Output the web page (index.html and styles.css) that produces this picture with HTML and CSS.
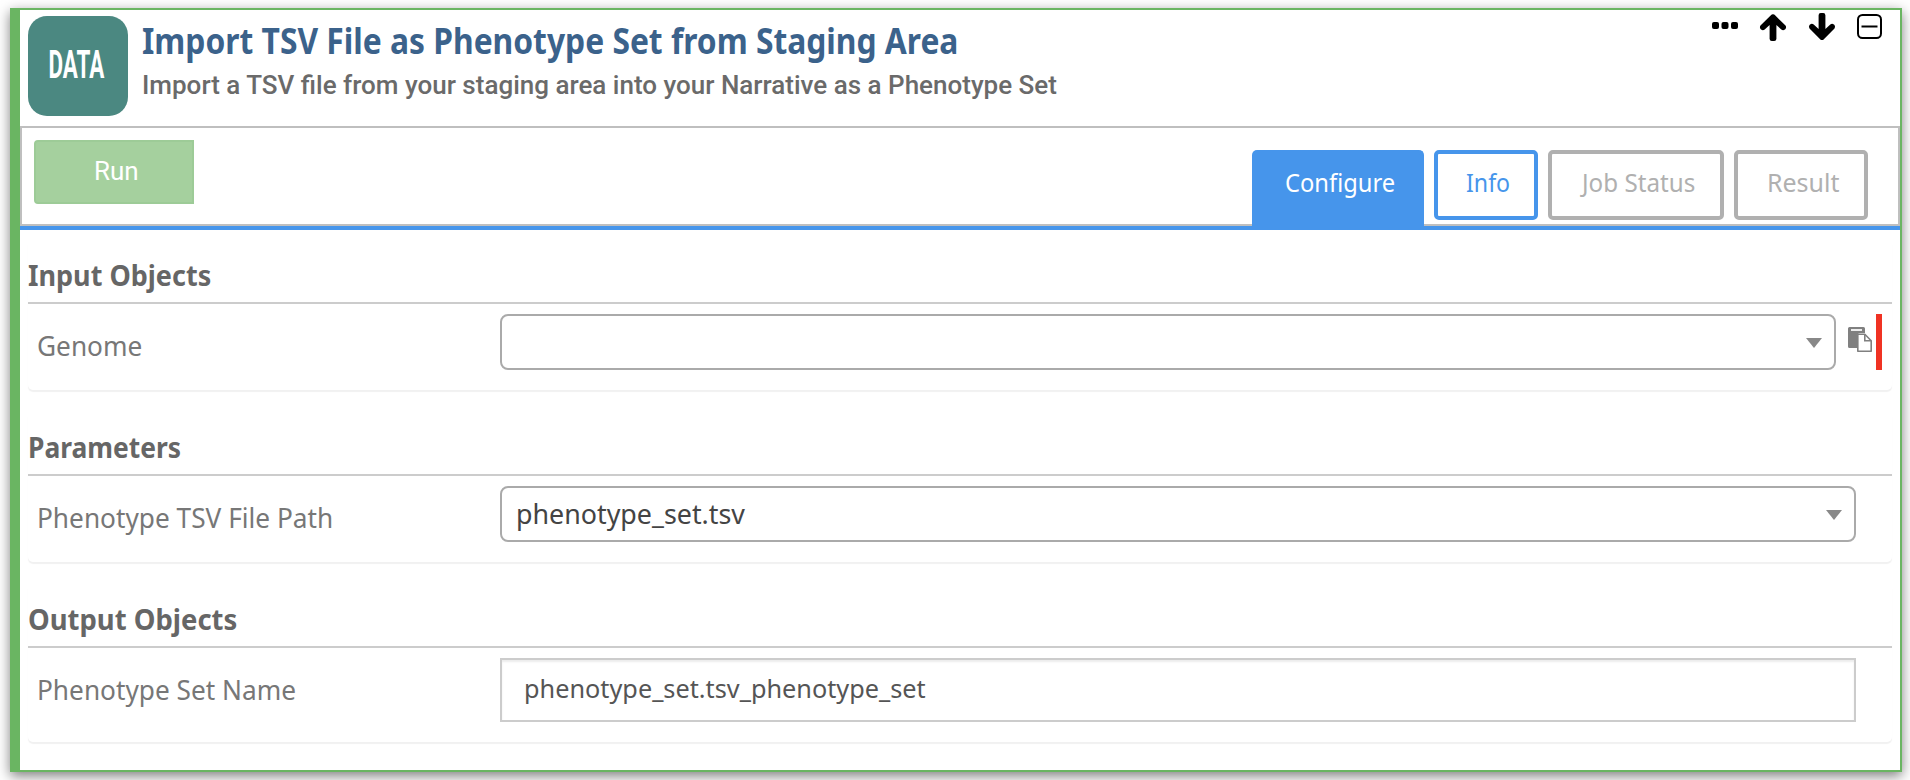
FILE: index.html
```html
<!DOCTYPE html>
<html lang="en">
<head>
<meta charset="utf-8">
<title>Import TSV File as Phenotype Set from Staging Area</title>
<link rel="stylesheet" href="styles.css">
</head>
<body>
<article class="cell">
  <header class="header">
    <div class="app-icon"><span>DATA</span></div>
    <div class="heading">
      <h1 class="title">Import TSV File as Phenotype Set from Staging Area</h1>
      <p class="subtitle">Import a TSV file from your staging area into your Narrative as a Phenotype Set</p>
    </div>
    <div class="actions">
      <svg width="26" height="30" viewBox="0 0 26 30"><rect y="11" width="7" height="7" rx="2"/><rect x="9.5" y="11" width="7" height="7" rx="2"/><rect x="19" y="11" width="7" height="7" rx="2"/></svg>
      <svg width="28" height="30" viewBox="0 0 28 30"><path d="M14 3.2a1.8 1.8 0 0 1 1.600.6L26.500 14.600a2.900 2.900 0 0 1 0 3.300l-.6.6a2.900 2.900 0 0 1-3.600 0L17.400 14v14a2.200 2.200 0 0 1-2.200 2h-2.400a2.200 2.200 0 0 1-2.200-2V14l-4.900 4.500a2.900 2.900 0 0 1-3.600 0l-.6-.6a2.900 2.900 0 0 1 0-3.300L12.400 3.800a1.800 1.800 0 0 1 1.600-.6z"/></svg>
      <svg width="28" height="30" viewBox="0 0 28 30"><path d="M14 29a1.8 1.8 0 0 1-1.600-.6L1.500 17.400a2.900 2.900 0 0 1 0-3.300l.6-.6a2.900 2.900 0 0 1 3.600 0l4.900 4.500V4.200A2.200 2.200 0 0 1 12.800 2h2.400a2.200 2.200 0 0 1 2.200 2.200V18l4.900-4.500a2.900 2.900 0 0 1 3.600 0l.6.6a2.900 2.900 0 0 1 0 3.300l-10.900 11a1.800 1.800 0 0 1-1.600.6z"/></svg>
      <svg width="25" height="30" viewBox="0 0 25 30"><rect x="1" y="4" width="23" height="23" rx="4.500" fill="none" stroke="#000" stroke-width="2"/><path d="M4.500 14.500h16v2h-16z"/></svg>
    </div>
  </header>
  <div class="toolbar-wrap">
    <div class="toolbar">
      <button class="run">Run</button>
      <nav class="tabs">
        <button class="tab active"><span class="t-configure">Configure</span></button>
        <button class="tab info"><span class="t-info">Info</span></button>
        <button class="tab job"><span class="t-job">Job Status</span></button>
        <button class="tab result"><span class="t-result">Result</span></button>
      </nav>
    </div>
  </div>
  <main class="body">
    <section class="group">
      <h2><span class="h-input">Input Objects</span></h2>
      <div class="row">
        <label><span>Genome</span></label>
        <div class="select with-tools"><span></span><i class="caret"></i></div>
        <svg class="paste" width="24" height="25" viewBox="0 0 24 25"><path fill="#808080" d="M1.500 0h14A1.500 1.500 0 0 1 17 1.500V6h-4.500A3.500 3.500 0 0 0 9 9.500V21H1.500A1.500 1.500 0 0 1 0 19.500v-18A1.500 1.500 0 0 1 1.500 0z"/><path fill="#eee" d="M3 2h11v2H3z"/><path fill="#fff" stroke="#808080" stroke-width="1.600" stroke-linejoin="round" d="M9.800 7.300h7l6.400 6.400v10.500H9.800z"/><path fill="none" stroke="#808080" stroke-width="1.600" d="M16.800 7.300v6.400h6.400"/></svg>
        <i class="required"></i>
      </div>
    </section>
    <section class="group">
      <h2><span class="h-params">Parameters</span></h2>
      <div class="row">
        <label><span>Phenotype TSV File Path</span></label>
        <div class="select"><span>phenotype_set.tsv</span><i class="caret"></i></div>
      </div>
    </section>
    <section class="group">
      <h2><span class="h-output">Output Objects</span></h2>
      <div class="row">
        <label><span>Phenotype Set Name</span></label>
        <div class="input"><span>phenotype_set.tsv_phenotype_set</span></div>
      </div>
    </section>
  </main>
</article>
</body>
</html>
```

FILE: styles.css
```css
* { box-sizing: border-box; }
html { background: #fff; }
body { margin: 0; padding: 8px 8px 8px 10px; height: 780px; overflow: hidden; font-family: "Noto Sans", "Open Sans", sans-serif; }
h1, h2, p { margin: 0; }
button { margin: 0; padding: 0; font: inherit; }

.cell { height: 764px; background: #fff; border: 2px solid #6ab562; border-left-width: 10px; box-shadow: 0 4px 12px rgba(0, 0, 0, .5); }

/* Horizontally condensed labels */
.title, .app-icon span, .tab span, h2 span, .row span { display: inline-block; white-space: nowrap; transform-origin: 0 50%; }

.header { display: flex; height: 116px; padding: 6px 18px 0 8px; }
.app-icon { display: flex; justify-content: center; width: 100px; height: 100px; padding-right: 3px; border-radius: 19px; background: #4b8881; color: #fff; font: 700 38px/99px Roboto, sans-serif; }
.app-icon span { transform: scaleX(.59); transform-origin: 50% 50%; }
.heading { flex: 1; padding: 5px 0 0 14px; }
.title { display: block; width: max-content; color: #3b628b; font-size: 35px; line-height: 39px; transform: scaleX(.908); }
.subtitle { margin-top: 10px; color: #6a6a6a; font: 500 26px/30px Roboto, sans-serif; }
.actions { display: flex; gap: 21px; height: 30px; margin-top: -5px; }
.actions svg { display: block; }

.toolbar-wrap { border-bottom: 4px solid #4695eb; }
.toolbar { display: flex; justify-content: space-between; height: 100px; padding: 12px 30px 0 12px; border: 2px solid #bfbfbf; }
.run { width: 160px; height: 64px; padding: 0 0 3px 58px; border: 2px solid #9dcb97; border-radius: 4px 0 0 4px; background: #a5d09e; color: #fff; font: 400 26px/56px Roboto, sans-serif; text-align: left; }
.tabs { display: flex; gap: 10px; align-items: flex-start; padding-top: 10px; }
.tab { height: 70px; padding: 0 0 6px 27px; border: 4px solid #b0b0b0; border-radius: 5px; background: #fff; color: #b0b0b0; font-size: 26px; line-height: 56px; text-align: left; }
.tab.active { width: 172px; height: 76px; padding: 0 0 16px 29px; border-color: #4695eb; border-bottom: 0; border-radius: 5px 5px 0 0; background: #4695eb; color: #fff; }
.tab.info { width: 104px; padding-left: 28px; border-color: #4695eb; color: #4695eb; }
.tab.job { width: 176px; padding-left: 30px; }
.tab.result { width: 134px; padding-left: 29px; }
.t-configure { transform: scaleX(.912); }
.t-info { transform: scaleX(.89); }
.t-job { transform: scaleX(.93); }
.t-result { transform: scaleX(.96); }

.body { display: grid; gap: 22px; padding: 10px 8px 0; }
.group { border-radius: 5px; box-shadow: 0 2px 1px #f1f1f1; }
h2 { height: 64px; padding-top: 17px; border-bottom: 2px solid #ccc; color: #666; font-size: 29px; line-height: 35px; }
.h-input { transform: scaleX(.931); }
.h-params { transform: scaleX(.91); }
.h-output { transform: scaleX(.947); }
.row { display: flex; padding: 10px 10px 20px; }
label { width: 462px; height: 56px; padding-top: 3px; color: #777; font-size: 28px; line-height: 56px; }
label span { margin-left: -1px; transform: scaleX(.937); }
.select { display: flex; justify-content: space-between; width: 1356px; height: 56px; padding: 0 12px 0 14px; border: 2px solid #aaa; border-radius: 8px; color: #444; font-size: 28px; line-height: 51px; }
.select.with-tools { width: 1336px; }
.select span { transform: scaleX(.958); }
.caret { margin-top: 22px; width: 0; height: 0; border: 8px solid transparent; border-top: 10px solid #888; border-bottom: 0; }
.paste { margin: 13px 4px 0 12px; }
.required { width: 6px; height: 56px; background: #f03223; }
.input { width: 1356px; height: 64px; padding-left: 22px; border: 2px solid #ccc; box-shadow: inset 0 2px 2px rgba(0, 0, 0, .075); color: #555; font-size: 26px; line-height: 56px; }
.input span { transform: scaleX(.972); }
```
